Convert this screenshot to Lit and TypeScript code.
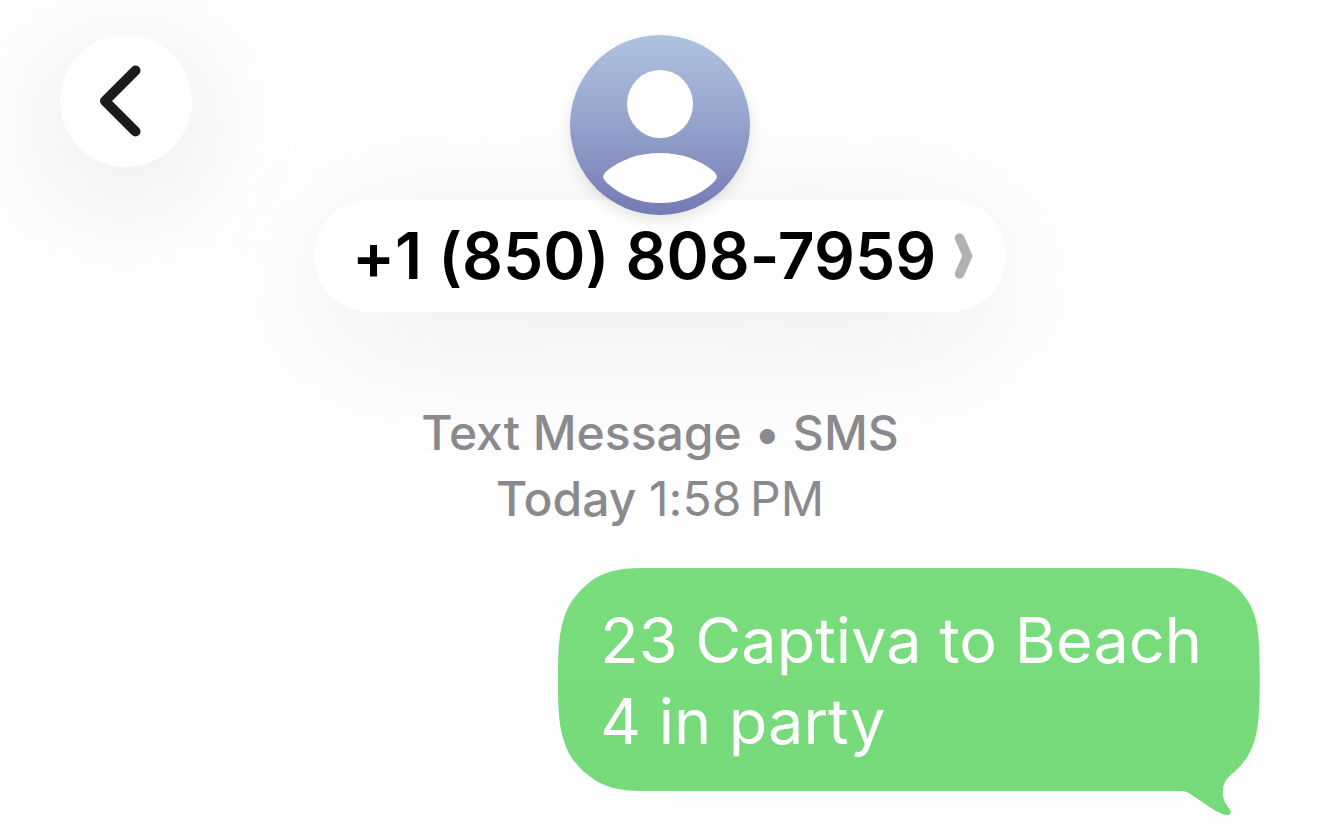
import { LitElement, html, css } from "lit";
import { customElement, property } from "lit/decorators.js";

@customElement("contact-avatar")
class ContactAvatar extends LitElement {
  static styles = css`
    :host {
      display: block;
      width: 180px;
      height: 180px;
      border-radius: 50%;
      box-shadow: 0 6px 14px rgba(0, 0, 0, 0.1);
    }
    .picture {
      display: block;
      width: 100%;
      height: 100%;
    }
  `;

  render() {
    return html`
      <svg class="picture" viewBox="0 0 180 180" aria-hidden="true">
        <defs>
          <linearGradient id="sky" x1="0" y1="0" x2="0" y2="1">
            <stop offset="0" stop-color="#aec2df" />
            <stop offset="0.5" stop-color="#95a2cc" />
            <stop offset="1" stop-color="#747ab4" />
          </linearGradient>
        </defs>
        <circle cx="90" cy="90" r="90" fill="url(#sky)" />
        <ellipse cx="90" cy="69" rx="33" ry="34" fill="#fff" />
        <path
          fill="#fff"
          d="M90 118C111 118 128 124 144 136.500Q149.500 141.500 144 147C129 161 111 168 90 168C69 168 51 161 36 147Q30.500 141.500 36 136.500C52 124 69 118 90 118Z"
        />
      </svg>
    `;
  }
}

@customElement("message-bubble")
class MessageBubble extends LitElement {
  @property({ attribute: false }) lines: string[] = [];

  static styles = css`
    :host {
      display: block;
    }
    .bubble {
      position: relative;
      padding: 32px 58px 29px 42px;
      font-size: 63px;
      line-height: 81px;
      color: #fff;
    }
    .shape {
      position: absolute;
      inset: 0;
      width: 100%;
      height: 100%;
      overflow: visible;
    }
    .text {
      position: relative;
      margin: 0;
      white-space: pre-line;
    }
  `;

  render() {
    return html`
      <div class="bubble">
        <svg class="shape" viewBox="0 0 702 223" preserveAspectRatio="none" aria-hidden="true">
          <defs>
            <linearGradient id="green" x1="0" y1="0" x2="0" y2="1">
              <stop offset="0" stop-color="#79dc7d" />
              <stop offset="1" stop-color="#76d97a" />
            </linearGradient>
          </defs>
          <path
            fill="url(#green)"
            d="M84 0H612C640 0 656 4 672 14C684 22 693 35 697 48C701 61 702 80 702 111C702 140 701 158 697 172C692 188 684 198 674 206C667 212 665 217 665 225C665 233 669 237 672.500 242C674 245 672 247.500 669 247C660 246 648 236 637 229C630 224 628 223 622 223H84C62 223 46 219 34 210C20 200 10 188 6 173C1 157 0 142 0 112C0 82 1 66 6 50C10 36 20 23 33 13C46 4 60 0 84 0Z"
          />
        </svg>
        <p class="text">${this.lines.join("\n")}</p>
      </div>
    `;
  }
}

@customElement("app-root")
class AppRoot extends LitElement {
  static styles = css`
    :host {
      display: block;
      min-height: 100vh;
      box-sizing: border-box;
      overflow: hidden;
      background: #fefefe;
      font-family: Inter, "Liberation Sans", sans-serif;
      font-variant-ligatures: no-contextual;
    }
    .header {
      display: grid;
      grid-template-columns: 1fr auto 1fr;
      align-items: start;
      padding: 35px 60px 0;
    }
    .back,
    .contact {
      margin: 0;
      padding: 0;
      border: 0;
      background: none;
      font: inherit;
      font-variant-ligatures: inherit;
      color: inherit;
      cursor: pointer;
    }
    .back {
      display: grid;
      place-items: center;
      width: 132px;
      height: 132px;
      border-radius: 50%;
      background: #fffffe;
      box-shadow: 0 26px 136px rgba(0, 0, 0, 0.12);
    }
    .contact {
      display: flex;
      flex-direction: column;
      align-items: center;
    }
    .avatar {
      z-index: 1;
      margin-bottom: -15px;
    }
    .pill {
      display: flex;
      align-items: center;
      gap: 18px;
      padding: 16px 32px 16px 38px;
      border-radius: 56px;
      background: #fffffe;
      box-shadow: 0 26px 144px rgba(0, 0, 0, 0.08);
    }
    .number {
      font-size: 64px;
      font-weight: 600;
      line-height: 80px;
      color: #000;
      white-space: nowrap;
    }
    .icon {
      display: block;
    }
    .thread {
      position: relative;
      display: flex;
      flex-direction: column;
      padding: 88px 60px 43px;
    }
    .meta {
      margin: 0;
      text-align: center;
      font-size: 48px;
      font-weight: 500;
      line-height: 66px;
      color: #8a8a8e;
    }
    .line {
      display: block;
    }
    .time {
      font-weight: 400;
    }
    .sent {
      align-self: flex-end;
      margin-top: 36px;
    }
  `;

  render() {
    return html`
      <header class="header">
        <button class="back" type="button" aria-label="Back">
          <svg class="icon" width="54" height="74" viewBox="0 0 54 74" aria-hidden="true">
            <path
              d="M36.500 6.500L6 37L36.500 67.500"
              fill="none"
              stroke="#1a1a1a"
              stroke-width="10"
              stroke-linecap="round"
              stroke-linejoin="round"
            />
          </svg>
        </button>
        <button class="contact" type="button">
          <contact-avatar class="avatar"></contact-avatar>
          <span class="pill">
            <span class="number">+1 (850) 808-7959</span>
            <svg class="icon" width="20" height="48" viewBox="0 0 20 48" aria-hidden="true">
              <path
                d="M5.500 6L13.500 24L5.500 42"
                fill="none"
                stroke="#b2b2b2"
                stroke-width="9.500"
                stroke-linecap="round"
                stroke-linejoin="round"
              />
            </svg>
          </span>
        </button>
      </header>
      <main class="thread">
        <p class="meta">
          <span class="line">Text Message • SMS</span>
          <span class="line">Today <time class="time" datetime="13:58">1:58${"\u202f"}PM</time></span>
        </p>
        <message-bubble class="sent" .lines=${["23 Captiva to Beach", "4 in party"]}></message-bubble>
      </main>
    `;
  }
}
